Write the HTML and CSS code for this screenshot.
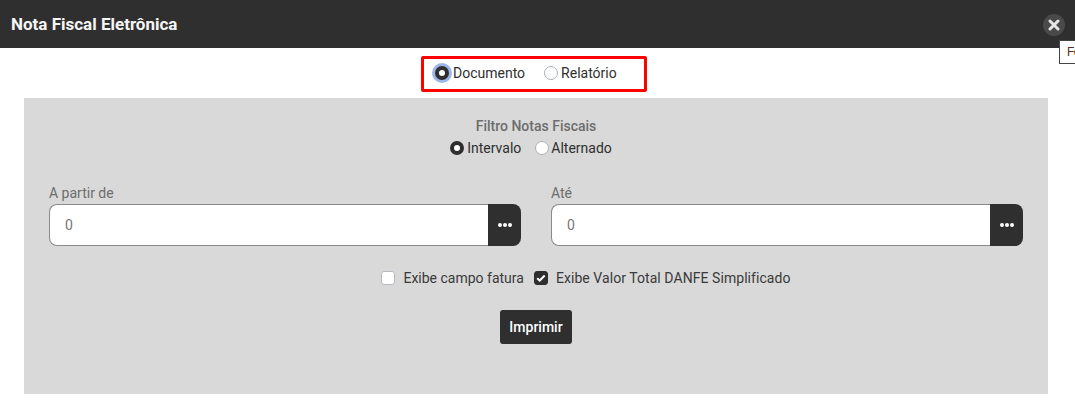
FILE: index.html
```html
<!DOCTYPE html>
<html lang="pt-BR">
<head>
<meta charset="utf-8">
<title>Nota Fiscal Eletrônica</title>
<link rel="stylesheet" href="styles.css">
</head>
<body>
<header class="header">
  <h1 class="title">Nota Fiscal Eletrônica</h1>
  <button class="close" type="button" aria-label="Fechar">
    <svg width="12" height="12" viewBox="0 0 12 12"><path d="M2 2l8 8M10 2l-8 8" stroke="#e6e6e6" stroke-width="3" stroke-linecap="round"/></svg>
  </button>
</header>
<div class="tooltip">Fe</div>
<div class="mode-row">
  <div class="mode-box">
    <label class="radio-item first"><span class="radio on focus"></span>Documento</label>
    <label class="radio-item"><span class="radio"></span>Relatório</label>
  </div>
</div>
<main class="panel">
  <div class="filter-title">Filtro Notas Fiscais</div>
  <div class="filter-row">
    <label class="radio-item"><span class="radio on"></span>Intervalo</label>
    <label class="radio-item tight"><span class="radio"></span>Alternado</label>
  </div>
  <div class="fields">
    <div class="field">
      <label class="field-label">A partir de</label>
      <div class="input-group">
        <div class="input">0</div>
        <button class="dots" type="button" aria-label="Selecionar"><i></i><i></i><i></i></button>
      </div>
    </div>
    <div class="field">
      <label class="field-label">Até</label>
      <div class="input-group">
        <div class="input">0</div>
        <button class="dots" type="button" aria-label="Selecionar"><i></i><i></i><i></i></button>
      </div>
    </div>
  </div>
  <div class="checks">
    <label class="check-item"><span class="check"></span>Exibe campo fatura</label>
    <label class="check-item wide"><span class="check checked"><svg width="10" height="8" viewBox="0 0 10 8"><path d="M1.2 4.2l2.5 2.3 5-5" fill="none" stroke="#fff" stroke-width="2"/></svg></span>Exibe Valor Total DANFE Simplificado</label>
  </div>
  <div class="actions"><button class="print" type="button">Imprimir</button></div>
</main>
</body>
</html>
```
FILE: styles.css
```css
* { box-sizing: border-box; }
html, body { margin: 0; padding: 0; }
body {
  width: 1075px;
  height: 408px;
  overflow: hidden;
  position: relative;
  background: #fff;
  font-family: Roboto, sans-serif;
  font-size: 14px;
  color: #2f2f2f;
}
.header {
  height: 48px;
  background: #2f2f2f;
  display: flex;
  align-items: center;
  justify-content: space-between;
  padding: 0 10px 0 11px;
}
.title { margin: 0; font-size: 17px; font-weight: 700; color: #f5f5f5; }
.close {
  width: 22px;
  height: 22px;
  margin-top: 2px;
  padding: 0;
  border: 0;
  border-radius: 50%;
  background: #4a4a4a;
  display: flex;
  align-items: center;
  justify-content: center;
}
.tooltip {
  position: absolute;
  right: 0;
  top: 40px;
  width: 16px;
  height: 24px;
  padding: 4px 0 0 7px;
  background: #fff;
  border: 1px solid #444;
  border-right: 0;
  overflow: hidden;
  white-space: nowrap;
  font: 12px/14px "Liberation Sans Narrow", "Liberation Sans", sans-serif;
  letter-spacing: -0.5px;
  color: #5a2a20;
}
.mode-row { display: flex; justify-content: center; padding-top: 8px; height: 50px; }
.mode-box {
  width: 226px;
  height: 36px;
  margin-right: 7px;
  border: 3px solid #f00;
  border-radius: 2px;
  display: flex;
  align-items: center;
  padding: 0 0 2px 11px;
  gap: 19px;
}
.radio-item { display: inline-flex; align-items: center; gap: 3px; line-height: 18px; color: #2f2f2f; }
.radio-item.first { gap: 4px; }
.radio-item.tight { gap: 2px; }
.radio {
  width: 14px;
  height: 14px;
  border-radius: 50%;
  background: #fff;
  border: 1px solid #aab0b8;
  flex: none;
}
.radio.on { border: 4px solid #2f2f2f; background: #fff; }
.radio.focus { box-shadow: 0 0 0 3px #9db6ea; }
.panel {
  margin: 0 27px 0 24px;
  height: 296px;
  background: #d9d9d9;
  padding-top: 20px;
}
.filter-title { text-align: center; font-size: 14px; font-weight: 500; color: #6d6d6d; line-height: 17px; }
.filter-row { display: flex; justify-content: center; gap: 14px; margin: 4px 10px 0 0; line-height: 18px; }
.fields { display: flex; gap: 30px; padding: 0 25px; margin-top: 28px; }
.field { flex: 1; }
.field-label { display: block; color: #6d6d6d; font-size: 14px; line-height: 17px; margin-bottom: 2px; }
.input-group { display: flex; height: 42px; }
.input {
  flex: 1;
  background: #fff;
  border: 1px solid #8a8a8a;
  border-right: 0;
  border-radius: 8px 0 0 8px;
  padding-left: 15px;
  line-height: 40px;
  color: #777;
}
.dots {
  width: 33px;
  padding: 0;
  border: 0;
  background: #2f2f2f;
  border-radius: 0 8px 8px 0;
  display: flex;
  align-items: center;
  justify-content: center;
  gap: 1px;
}
.dots i { width: 4px; height: 4px; border-radius: 50%; background: #fff; }
.checks { display: flex; justify-content: center; gap: 10px; margin: 23px 0 0 100px; height: 18px; }
.check-item { display: inline-flex; align-items: center; gap: 8px; font-size: 14px; line-height: 18px; color: #3a3a3a; }
.check-item.wide { letter-spacing: 0.06px; }
.check {
  width: 14px;
  height: 14px;
  background: #fff;
  border: 1px solid #b5bac0;
  border-radius: 3px;
  display: flex;
  align-items: center;
  justify-content: center;
  flex: none;
}
.check.checked { background: #2f2f2f; border-color: #2f2f2f; }
.actions { display: flex; justify-content: center; margin-top: 23px; }
.print {
  width: 72px;
  height: 34px;
  padding: 0;
  border: 0;
  border-radius: 3px;
  background: #2f2f2f;
  color: #fff;
  font: 500 14px Roboto, sans-serif;
}
```
